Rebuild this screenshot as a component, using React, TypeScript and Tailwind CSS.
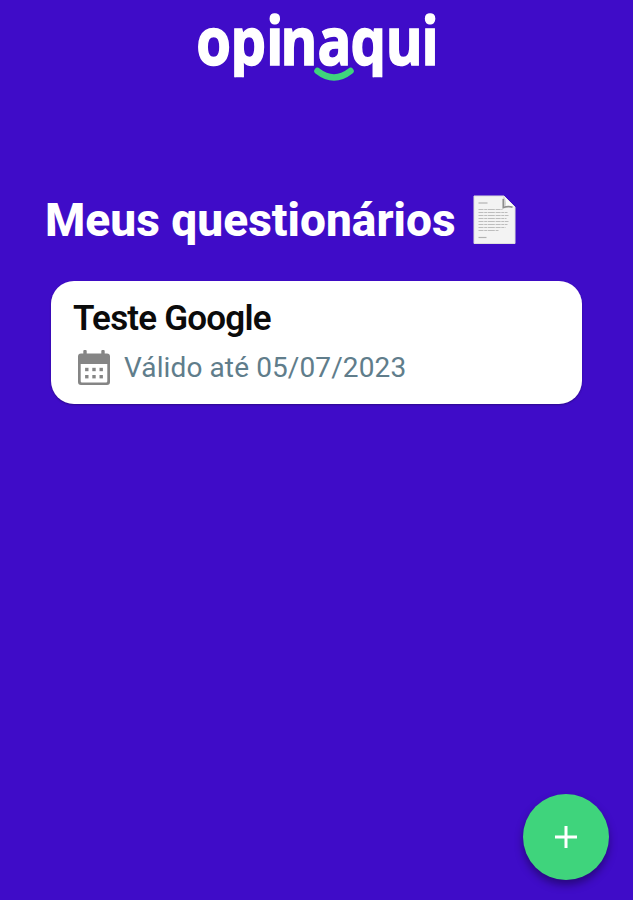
type Questionnaire = {
  title: string;
  expiresAt: string;
};

const questionnaires: Questionnaire[] = [
  { title: "Teste Google", expiresAt: "05/07/2023" },
];

function Logo() {
  return (
    <svg
      width="260"
      height="100"
      viewBox="187 0 260 100"
      role="img"
      aria-label="opinaqui"
      className="block"
    >
      {/* short descenders, p and q end flat */}
      <clipPath id="wordmark">
        <rect x="187" y="0" width="260" height="77.3" />
      </clipPath>
      <g clipPath="url(#wordmark)">
        <text
          transform="scale(.85 1)"
          x="230.8 271.1 313.1 329.9 373.5 412.4 453.8 495.8"
          y="64.5"
          strokeWidth="1.6"
          className="fill-white stroke-white font-['Open_Sans',sans-serif] text-[66px] font-bold"
        >
          opinaqui
        </text>
      </g>
      <path
        d="M317.5 71 Q334 84 350.5 71"
        fill="none"
        stroke="#3f0cc8"
        strokeWidth="8.5"
        strokeLinecap="round"
      />
      <path
        d="M317.5 71 Q334 84 350.5 71"
        fill="none"
        stroke="#3fd47c"
        strokeWidth="6.5"
        strokeLinecap="round"
      />
    </svg>
  );
}

function PageIcon() {
  // widths of the tiny text lines on the sheet
  const lines = [24, 29, 30, 28, 30, 29, 27, 20];
  return (
    <svg width="44" height="50" viewBox="0 0 44 50" className="block">
      <path d="M1 1H31L42 12V48.5H1Z" fill="#f3f3f3" stroke="#dedede" />
      <path d="M31 1L42 12L29.5 13.5V4Z" fill="#d2d2d2" />
      <path d="M31 1L42 12Q36 10.5 32.5 11.5Q34 6 31 1Z" fill="#fbfbfb" />
      <path
        d="M30.3 4V12.6Q35 10.6 39.5 12.2"
        fill="none"
        stroke="#8d8d8d"
        strokeWidth="1.5"
      />
      <path d="M5.5 8H14.5" stroke="#b2b2b2" strokeWidth="1.2" />
      {lines.map((w, i) => (
        <path
          key={i}
          d={`M5.5 ${14.5 + i * 3}h${w}`}
          stroke="#bdbdbd"
          strokeWidth="1.1"
          strokeDasharray="5 .7 3 .6 7 .8"
        />
      ))}
      <path d="M5.5 42.5H13.5" stroke="#b2b2b2" strokeWidth="1.2" />
    </svg>
  );
}

function CalendarIcon() {
  return (
    <svg width="32" height="36" viewBox="0 0 32 36" fill="#858585" className="block">
      <rect x="5.3" y="0" width="3.4" height="7" rx="1" />
      <rect x="23.3" y="0" width="3.4" height="7" rx="1" />
      <path
        fillRule="evenodd"
        d="M3 3.5H29Q32 3.5 32 6.5V32Q32 35 29 35H3Q0 35 0 32V6.5Q0 3.5 3 3.5ZM2.7 14V31.3Q2.7 32.5 4 32.5H28Q29.3 32.5 29.3 31.3V14Z"
      />
      {[8.8, 16, 23.2].map((x) => (
        <g key={x}>
          <rect x={x - 1.7} y="17.8" width="3.4" height="3.4" />
          <rect x={x - 1.7} y="25" width="3.4" height="3.4" />
        </g>
      ))}
    </svg>
  );
}

function QuestionnaireCard({ item }: { item: Questionnaire }) {
  return (
    <article className="h-[123px] rounded-[23px] bg-white px-[22px] pt-[18px] shadow-[0_1px_2px_rgba(0,0,0,0.3)]">
      <h2 className="text-[35px] leading-10 font-semibold tracking-[-0.8px] whitespace-nowrap text-[#0b0b0b]">
        {item.title}
      </h2>
      <div className="mt-[11px] flex items-center gap-[14px] pl-[5px]">
        <CalendarIcon />
        <span className="text-[28px] leading-9 tracking-[0.11px] whitespace-nowrap text-[#607d8b]">
          Válido até {item.expiresAt}
        </span>
      </div>
    </article>
  );
}

export default function App() {
  return (
    <div className="flex h-[900px] w-[633px] flex-col overflow-hidden bg-[#3f0cc8] font-[Roboto,sans-serif]">
      <header className="flex h-[195px] justify-center">
        <Logo />
      </header>

      <main className="flex-1">
        <div className="flex items-start pl-[45px]">
          <h1 className="w-[428px] text-[46px] leading-[50px] font-extrabold tracking-[0.03px] whitespace-nowrap text-white">
            Meus questionários
          </h1>
          <PageIcon />
        </div>
        <section className="mt-[36px] ml-[51px] w-[531px]">
          {questionnaires.map((item) => (
            <QuestionnaireCard key={item.title} item={item} />
          ))}
        </section>
      </main>

      <footer className="flex justify-end pr-6 pb-5">
        <button
          aria-label="Adicionar"
          className="flex size-[86px] items-center justify-center rounded-full bg-[#3fd47c] shadow-[0_5px_9px_rgba(0,0,0,0.38)]"
        >
          <svg width="22" height="22" viewBox="0 0 22 22" stroke="#fff" strokeWidth="3">
            <path d="M11 0V22M0 11H22" />
          </svg>
        </button>
      </footer>
    </div>
  );
}
